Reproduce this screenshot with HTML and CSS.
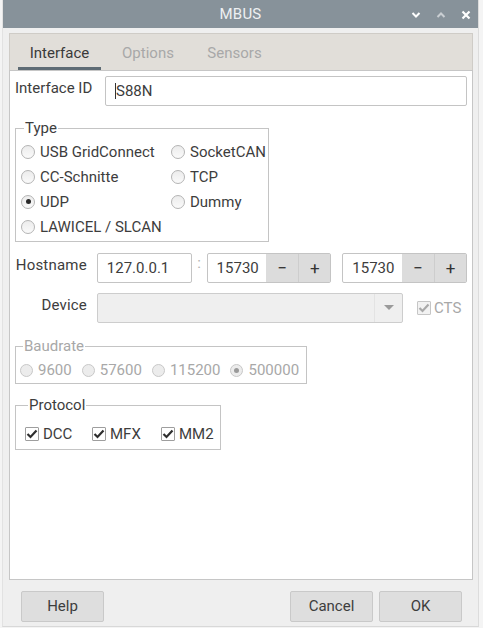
FILE: index.html
```html
<!DOCTYPE html>
<html>
<head>
<meta charset="utf-8">
<link rel="stylesheet" href="styles.css">
</head>
<body>
<div class="window">
  <div class="titlebar">
    <span class="title">MBUS</span>
    <div class="wbtns">
      <svg width="10" height="8" viewBox="0 0 10 8"><path d="M1.5 2 L5 5.5 L8.5 2" fill="none" stroke="#fff" stroke-width="2"/></svg>
      <svg width="10" height="8" viewBox="0 0 10 8"><path d="M1.5 6 L5 2.5 L8.5 6" fill="none" stroke="#c9ced2" stroke-width="2"/></svg>
      <svg width="10" height="10" viewBox="0 0 10 10"><path d="M1.5 1.5 L8.5 8.5 M8.5 1.5 L1.5 8.5" fill="none" stroke="#fff" stroke-width="2.2"/></svg>
    </div>
  </div>
  <div class="wbody">
    <div class="tabs">
      <div class="tabbar">
        <div class="tab active">Interface</div>
        <div class="tab">Options</div>
        <div class="tab">Sensors</div>
      </div>
      <div class="pane">
        <div class="row idrow">
          <div class="idlabel">Interface ID</div>
          <div class="input idinput"><span class="caret"></span>S88N</div>
        </div>

        <fieldset class="group typegroup">
          <legend>Type</legend>
          <div class="radiogrid">
            <label class="opt"><span class="radio"></span>USB GridConnect</label>
            <label class="opt"><span class="radio"></span>SocketCAN</label>
            <label class="opt"><span class="radio"></span>CC-Schnitte</label>
            <label class="opt"><span class="radio"></span>TCP</label>
            <label class="opt"><span class="radio checked"></span>UDP</label>
            <label class="opt"><span class="radio"></span>Dummy</label>
            <label class="opt"><span class="radio"></span>LAWICEL / SLCAN</label>
          </div>
        </fieldset>

        <div class="row hostrow">
          <div class="flabel">Hostname</div>
          <div class="input hostinput">127.0.0.1</div>
          <div class="colon">:</div>
          <div class="spin spin1">
            <div class="spinval">15730</div>
            <div class="spinbtn">&minus;</div>
            <div class="spinbtn">+</div>
          </div>
          <div class="spin spin2">
            <div class="spinval">15730</div>
            <div class="spinbtn">&minus;</div>
            <div class="spinbtn">+</div>
          </div>
        </div>

        <div class="row devrow">
          <div class="flabel">Device</div>
          <div class="combo">
            <div class="comboval"></div>
            <div class="comboarrow"><svg width="10" height="6" viewBox="0 0 10 6"><path d="M0 0 L10 0 L5 5 Z" fill="#9a9a9a"/></svg></div>
          </div>
          <label class="cts"><span class="check dis"><svg width="12" height="10" viewBox="0 0 12 10"><path d="M1.5 5 L4.5 8 L10.5 1.5" fill="none" stroke="#a9a9a9" stroke-width="2.2"/></svg></span>CTS</label>
        </div>

        <fieldset class="group baudgroup">
          <legend>Baudrate</legend>
          <div class="baudrow">
            <label class="opt"><span class="radio dis"></span>9600</label>
            <label class="opt"><span class="radio dis"></span>57600</label>
            <label class="opt"><span class="radio dis"></span>115200</label>
            <label class="opt"><span class="radio dis checked"></span>500000</label>
          </div>
        </fieldset>

        <fieldset class="group protogroup">
          <legend>Protocol</legend>
          <div class="protorow">
            <label class="opt"><span class="check"><svg width="12" height="10" viewBox="0 0 12 10"><path d="M1.5 5 L4.5 8 L10.5 1.5" fill="none" stroke="#2e2e2e" stroke-width="2.2"/></svg></span>DCC</label>
            <label class="opt"><span class="check"><svg width="12" height="10" viewBox="0 0 12 10"><path d="M1.5 5 L4.5 8 L10.5 1.5" fill="none" stroke="#2e2e2e" stroke-width="2.2"/></svg></span>MFX</label>
            <label class="opt"><span class="check"><svg width="12" height="10" viewBox="0 0 12 10"><path d="M1.5 5 L4.5 8 L10.5 1.5" fill="none" stroke="#2e2e2e" stroke-width="2.2"/></svg></span>MM2</label>
          </div>
        </fieldset>
      </div>
    </div>
    <div class="buttons">
      <div class="btn">Help</div>
      <div class="spacer"></div>
      <div class="btn">Cancel</div>
      <div class="btn">OK</div>
    </div>
  </div>
</div>
</body>
</html>
```

FILE: styles.css
```css
* { box-sizing: border-box; }
html, body { margin: 0; padding: 0; }
body {
  width: 483px;
  height: 628px;
  background: #f4f4f4;
  font-family: Roboto, "Liberation Sans", sans-serif;
  font-size: 15px;
  color: #3d3d3d;
  overflow: hidden;
}
.window {
  margin-left: 2px;
  width: 477px;
  height: 627px;
  background: #efefef;
  border-left: 1px solid #e2e2e2;
  border-right: 1px solid #dcdcdc;
  border-bottom: 1px solid #d8d8d8;
  display: flex;
  flex-direction: column;
}
.titlebar {
  height: 28px;
  background: #87929a;
  display: flex;
  align-items: center;
  justify-content: center;
  position: relative;
  color: #eef0f2;
}
.title { font-size: 15px; letter-spacing: 0.2px; }
.wbtns {
  position: absolute;
  right: 7px;
  top: 10px;
  display: flex;
  gap: 15px;
  align-items: center;
}
.wbody {
  flex: 1;
  padding: 5px 5px 0 6px;
  display: flex;
  flex-direction: column;
}
.tabs { display: flex; flex-direction: column; }
.tabbar {
  height: 37px;
  background: #e1ded9;
  border: 1px solid #cfccc7;
  border-bottom: none;
  display: flex;
  padding-left: 8px;
}
.tab {
  text-align: center;
  padding-top: 2px;
  line-height: 34px;
  height: 36px;
  color: #a8a8a8;
  border-bottom: 3px solid transparent;
}
.tab.active {
  color: #3a3a3a;
  border-bottom-color: #5e6b74;
  width: 83px;
}
.tab:nth-child(2) { width: 94px; }
.tab:nth-child(3) { width: 79px; }
.pane {
  height: 510px;
  background: #fff;
  border: 1px solid #c6c6c6;
  padding: 5px 5px 0 5px;
}
.row { display: flex; align-items: center; }
.idrow { align-items: flex-start; }
.idlabel { width: 90px; padding-top: 3px; line-height: 18px; }
.input {
  height: 30px;
  border: 1px solid #c4c4c4;
  background: #fff;
  border-radius: 2px;
  padding-left: 9px;
  display: flex;
  align-items: center;
}
.idinput { width: 362px; position: relative; padding-left: 10px; }
.caret {
  display: inline-block;
  width: 1px;
  height: 16px;
  background: #333;
  position: absolute;
  left: 9px;
  top: 6px;
}
.group {
  margin: 0;
  padding: 0;
  border: 1px solid #c4c4c4;
  border-radius: 0;
  min-width: 0;
}
.group legend {
  padding: 0 1px;
  margin-left: 3px;
  line-height: 16px;
}
.typegroup { margin-top: 14px; width: 254px; padding: 3px 0 2px 5px; }
.radiogrid {
  display: grid;
  grid-template-columns: 150px 98px;
  grid-auto-rows: 25px;
}
.opt { display: flex; align-items: center; white-space: nowrap; }
.radio {
  width: 14px;
  height: 14px;
  border-radius: 50%;
  border: 1px solid #b4b4b4;
  background: linear-gradient(#ececec, #fafafa);
  margin-right: 5px;
  position: relative;
  flex: none;
}
.radio.checked::after {
  content: "";
  position: absolute;
  left: 3.5px;
  top: 3.5px;
  width: 5px;
  height: 5px;
  border-radius: 50%;
  background: #2a2a2a;
}
.radio.dis { border-color: #c8c8c8; background: #ececec; }
.radio.dis.checked::after { background: #9a9a9a; }
.hostrow { margin-top: 11px; }
.flabel {
  width: 72px;
  text-align: right;
  margin-right: 10px;
  padding-bottom: 7px;
  letter-spacing: 0.2px;
}
.hostinput { width: 95px; }
.colon { width: 15px; text-align: center; color: #b0b0b0; margin-top: -10px; }
.spin {
  height: 30px;
  border: 1px solid #c4c4c4;
  border-radius: 2px;
  display: flex;
  background: #fff;
}
.spin1 { width: 125px; }
.spin2 { width: 125px; margin-left: 11px; }
.spinval { flex: 1; padding-left: 9px; line-height: 28px; }
.spinbtn {
  width: 32px;
  background: #dcdcdc;
  border-left: 1px solid #cdcdcd;
  text-align: center;
  line-height: 28px;
  font-size: 17px;
  color: #333;
}
.spin .spinbtn:nth-child(2) { border-left: none; }
.devrow { margin-top: 10px; }
.combo {
  width: 306px;
  height: 30px;
  background: #efefef;
  border: 1px solid #cdcdcd;
  border-radius: 2px;
  display: flex;
}
.comboval { flex: 1; }
.comboarrow {
  width: 28px;
  display: flex;
  align-items: center;
  justify-content: center;
  border-left: 1px solid #e3e3e3;
}
.cts { margin-left: 14px; color: #a8a8a8; display: flex; align-items: center; }
.check {
  width: 14px;
  height: 14px;
  border: 1px solid #9e9e9e;
  background: #fff;
  border-radius: 1px;
  margin-right: 4px;
  display: flex;
  align-items: center;
  justify-content: center;
  flex: none;
}
.check.dis { border-color: #c6c6c6; background: #f2f2f2; margin-right: 3px; }
.baudgroup {
  margin-top: 15px;
  width: 292px;
  color: #a8a8a8;
  padding: 6px 0 3px 4px;
}
.baudrow { display: flex; height: 20px; }
.baudrow .opt { margin-right: 10px; }
.baudrow .radio { width: 13px; height: 13px; margin-right: 5px; }
.baudrow .radio.checked::after { left: 3px; top: 3px; }
.protogroup {
  margin-top: 13px;
  width: 206px;
  padding: 11px 0 5px 9px;
}
.protorow { display: flex; height: 20px; }
.protorow .opt:nth-child(1) { width: 67px; }
.protorow .opt:nth-child(2) { width: 69px; }
.buttons {
  display: flex;
  padding: 11px 11px 0 12px;
  gap: 6px;
}
.spacer { flex: 1; }
.btn {
  width: 83px;
  height: 31px;
  background: #dedede;
  border: 1px solid #c9c9c9;
  border-radius: 2px;
  text-align: center;
  line-height: 29px;
}
```
